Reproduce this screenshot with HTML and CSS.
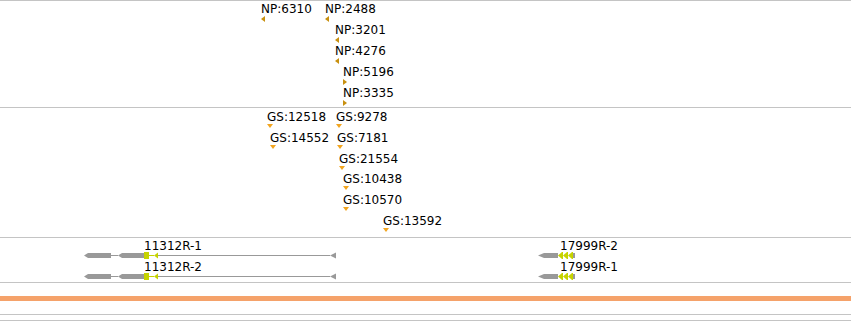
FILE: index.html
```html
<!DOCTYPE html>
<html lang="en">
  <head>
    <meta charset="UTF-8" />
    <title>Track view</title>
    <link rel="stylesheet" href="styles.css">
  </head>
  <body>
    <div class="browser">
      <!-- NP track -->
      <div class="track track-np">
        <div class="feature" style="left: 261px; top: 1px">
          <span class="label">NP:6310</span>
          <span class="arrow arrow-left"></span>
        </div>
        <div class="feature" style="left: 325px; top: 1px">
          <span class="label">NP:2488</span>
          <span class="arrow arrow-left"></span>
        </div>
        <div class="feature" style="left: 335px; top: 22px">
          <span class="label">NP:3201</span>
          <span class="arrow arrow-left"></span>
        </div>
        <div class="feature" style="left: 335px; top: 43px">
          <span class="label">NP:4276</span>
          <span class="arrow arrow-left"></span>
        </div>
        <div class="feature" style="left: 343px; top: 64px">
          <span class="label">NP:5196</span>
          <span class="arrow arrow-right"></span>
        </div>
        <div class="feature" style="left: 343px; top: 85px">
          <span class="label">NP:3335</span>
          <span class="arrow arrow-right"></span>
        </div>
      </div>

      <!-- GS track -->
      <div class="track track-gs">
        <div class="feature" style="left: 267px; top: 2px">
          <span class="label">GS:12518</span>
          <span class="arrow arrow-down"></span>
        </div>
        <div class="feature" style="left: 336px; top: 2px">
          <span class="label">GS:9278</span>
          <span class="arrow arrow-down"></span>
        </div>
        <div class="feature" style="left: 270px; top: 23px">
          <span class="label">GS:14552</span>
          <span class="arrow arrow-down"></span>
        </div>
        <div class="feature" style="left: 337px; top: 23px">
          <span class="label">GS:7181</span>
          <span class="arrow arrow-down"></span>
        </div>
        <div class="feature" style="left: 339px; top: 44px">
          <span class="label">GS:21554</span>
          <span class="arrow arrow-down"></span>
        </div>
        <div class="feature" style="left: 343px; top: 64px">
          <span class="label">GS:10438</span>
          <span class="arrow arrow-down"></span>
        </div>
        <div class="feature" style="left: 343px; top: 85px">
          <span class="label">GS:10570</span>
          <span class="arrow arrow-down"></span>
        </div>
        <div class="feature" style="left: 383px; top: 106px">
          <span class="label">GS:13592</span>
          <span class="arrow arrow-down"></span>
        </div>
      </div>

      <!-- gene models -->
      <div class="track track-genes">
        <span class="gene-label" style="left: 144px; top: 1px">11312R-1</span>
        <svg class="gene" style="left: 84px; top: 13px" width="256" height="9" viewBox="0 0 256 9">
          <polygon class="utr" points="0,4.5 4,2 27,2 27,7 4,7" />
          <rect class="intron" x="27" y="4" width="7" height="1" />
          <polygon class="utr" points="34,4.5 38,2 60,2 60,7 38,7" />
          <rect class="cds" x="60" y="1" width="5" height="7" />
          <rect class="cds" x="65" y="4" width="5" height="1" />
          <polygon class="cds" points="70,4.5 74,1.5 74,7.5" />
          <rect class="intron" x="74" y="4" width="172" height="1" />
          <polygon class="utr" points="246,4.5 252,1.5 252,7.5" />
        </svg>
        <span class="gene-label" style="left: 144px; top: 22px">11312R-2</span>
        <svg class="gene" style="left: 84px; top: 34px" width="256" height="9" viewBox="0 0 256 9">
          <polygon class="utr" points="0,4.5 4,2 27,2 27,7 4,7" />
          <rect class="intron" x="27" y="4" width="7" height="1" />
          <polygon class="utr" points="34,4.5 38,2 60,2 60,7 38,7" />
          <rect class="cds" x="60" y="1" width="5" height="7" />
          <rect class="cds" x="65" y="4" width="5" height="1" />
          <polygon class="cds" points="70,4.5 74,1.5 74,7.5" />
          <rect class="intron" x="74" y="4" width="172" height="1" />
          <polygon class="utr" points="246,4.5 252,1.5 252,7.5" />
        </svg>

        <span class="gene-label" style="left: 560px; top: 1px">17999R-2</span>
        <svg class="gene" style="left: 537px; top: 13px" width="40" height="9" viewBox="0 0 40 9">
          <polygon class="utr" points="1,4.5 7,2 21,2 21,7 7,7" />
          <polygon class="cds" points="21,4.5 25,1 26,1 26,8 25,8" />
          <polygon class="cds" points="26,4.5 30,1 31,1 31,8 30,8" />
          <polygon class="cds" points="31,4.5 35,1 36,1 36,8 35,8" />
          <rect class="utr" x="36" y="2" width="2" height="5" />
        </svg>
        <span class="gene-label" style="left: 560px; top: 22px">17999R-1</span>
        <svg class="gene" style="left: 537px; top: 34px" width="40" height="9" viewBox="0 0 40 9">
          <polygon class="utr" points="1,4.5 7,2 21,2 21,7 7,7" />
          <polygon class="cds" points="21,4.5 25,1 26,1 26,8 25,8" />
          <polygon class="cds" points="26,4.5 30,1 31,1 31,8 30,8" />
          <polygon class="cds" points="31,4.5 35,1 36,1 36,8 35,8" />
          <rect class="utr" x="36" y="2" width="2" height="5" />
        </svg>
      </div>

      <!-- overview / location bar -->
      <div class="overview">
        <div class="overview-bar"></div>
      </div>
      <div class="ruler"></div>
    </div>
  </body>
</html>
```

FILE: styles.css
```css
* {
  margin: 0;
  padding: 0;
  box-sizing: border-box;
}

body {
  font-family: "DejaVu Sans", Verdana, sans-serif;
  background: #fff;
  color: #000;
  width: 851px;
  height: 322px;
  overflow: hidden;
}

.browser {
  display: flex;
  flex-direction: column;
}

.track {
  position: relative;
  border-top: 1px solid #c4c4c4;
}

.track-np {
  height: 107px;
}

.track-gs {
  height: 130px;
}

.track-genes {
  height: 45px;
}

/* feature = label with its strand glyph underneath */
.feature {
  position: absolute;
  white-space: nowrap;
}

.feature .label {
  display: block;
  font-size: 12px;
  line-height: 14px;
}

.arrow {
  display: block;
  width: 0;
  height: 0;
  border-style: solid;
}

.arrow-left {
  border-width: 3px 4px 3px 0;
  border-color: transparent #c8900f transparent transparent;
}

.arrow-right {
  border-width: 3px 0 3px 4px;
  border-color: transparent transparent transparent #c8900f;
}

.arrow-down {
  border-width: 4px 3px 0 3px;
  border-color: #f2a51f transparent transparent transparent;
}

/* gene models */
.gene-label {
  position: absolute;
  font-size: 12px;
  line-height: 14px;
  white-space: nowrap;
}

.gene {
  position: absolute;
  display: block;
}

.gene .utr {
  fill: #999;
}

.gene .intron {
  fill: #999;
}

.gene .cds {
  fill: #c6d300;
}

.overview {
  border-top: 1px solid #c4c4c4;
  padding: 13px 0;
}

.overview-bar {
  height: 5px;
  background: #f5a26a;
}

.ruler {
  border-top: 1px solid #c4c4c4;
  border-bottom: 1px solid #c4c4c4;
  height: 7px;
}
```
